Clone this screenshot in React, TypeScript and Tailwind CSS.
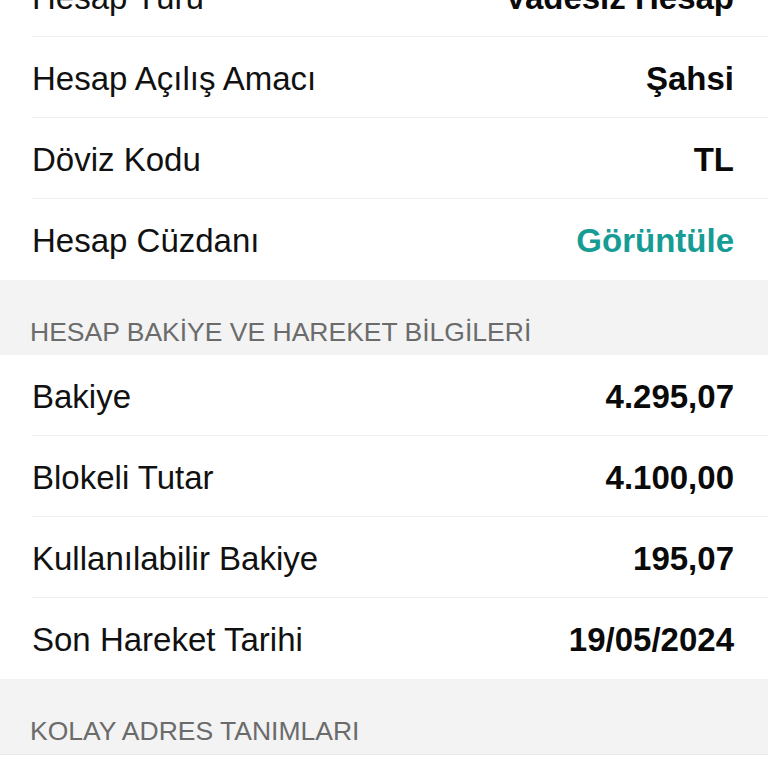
import React from 'react';

type Row = { label: string; value: string; accent?: boolean };

const accountRows: Row[] = [
  { label: 'Hesap Türü', value: 'Vadesiz Hesap' },
  { label: 'Hesap Açılış Amacı', value: 'Şahsi' },
  { label: 'Döviz Kodu', value: 'TL' },
  { label: 'Hesap Cüzdanı', value: 'Görüntüle', accent: true },
];

const balanceRows: Row[] = [
  { label: 'Bakiye', value: '4.295,07' },
  { label: 'Blokeli Tutar', value: '4.100,00' },
  { label: 'Kullanılabilir Bakiye', value: '195,07' },
  { label: 'Son Hareket Tarihi', value: '19/05/2024' },
];

function DetailRow({ row, last }: { row: Row; last: boolean }) {
  return (
    <div className="bg-white pl-8">
      <div
        className={
          'flex h-[81px] items-center justify-between pr-[34px] pt-[3px] ' +
          (last ? '' : 'border-b border-[#efefef]')
        }
      >
        <span className="text-[33px] text-[#111111]">{row.label}</span>
        <span
          className={
            'text-[33px] font-semibold ' + (row.accent ? 'text-[#169c94]' : 'text-[#0a0a0a]')
          }
        >
          {row.value}
        </span>
      </div>
    </div>
  );
}

function SectionHeader({ title }: { title: string }) {
  return (
    <div className="flex h-[75px] items-end bg-[#f3f3f3] px-[30px] pb-[7px]">
      <span className="text-[26.5px] leading-[32px] text-[#6b6b6b]">{title}</span>
    </div>
  );
}

export default function App() {
  return (
    <div
      className="h-[768px] w-full overflow-hidden bg-white"
      style={{ fontFamily: '"Liberation Sans", Arial, sans-serif' }}
    >
      <div className="mt-[-44px]">
        {accountRows.map((row, i) => (
          <DetailRow key={row.label} row={row} last={i === accountRows.length - 1} />
        ))}
        <SectionHeader title="HESAP BAKİYE VE HAREKET BİLGİLERİ" />
        {balanceRows.map((row, i) => (
          <DetailRow key={row.label} row={row} last={i === balanceRows.length - 1} />
        ))}
        <div className="border-b border-[#ebebeb]">
          <SectionHeader title="KOLAY ADRES TANIMLARI" />
        </div>
        <div className="h-[81px] bg-white" />
      </div>
    </div>
  );
}
